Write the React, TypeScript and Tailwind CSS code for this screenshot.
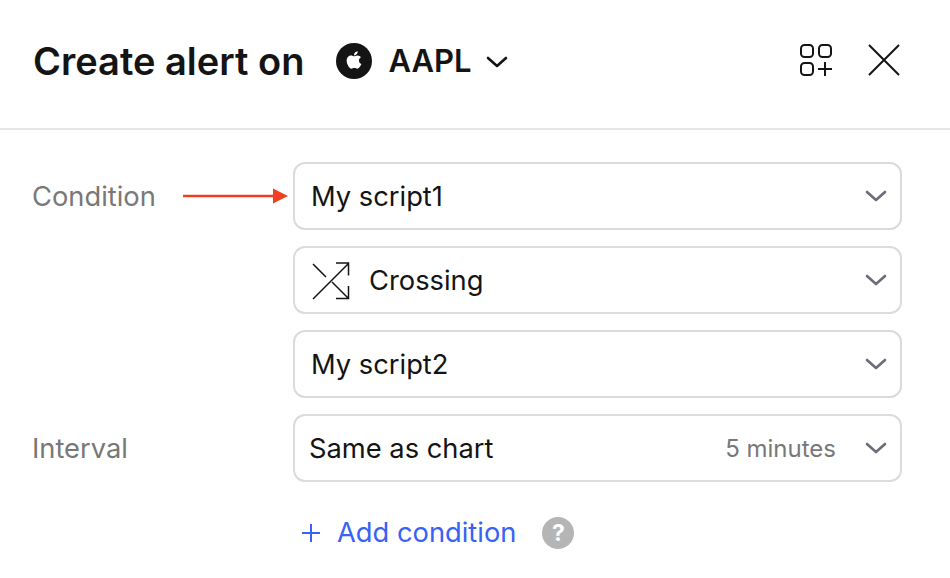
import React from 'react'
import { FaApple } from 'react-icons/fa'

const Chevron = ({ className = 'w-[22px] h-[12px] text-[#6a6d78]' }: { className?: string }) => (
  <svg viewBox="0 0 22 12" fill="none" className={className}>
    <path d="M2 2l9 8 9-8" stroke="currentColor" strokeWidth="2.6" strokeLinecap="round" strokeLinejoin="round" />
  </svg>
)

const CrossingIcon = () => (
  <svg viewBox="0 0 38 40" fill="none" className="w-[38px] h-[40px] shrink-0 text-[#141414]">
    <path d="M1 38L36 3M24 2h12.500v12.500M1 3l13 13M20 21l16 16M36.500 25v12.500H24" stroke="currentColor" strokeWidth="1.500" />
  </svg>
)

const Select = ({ children, right, px = 'pl-[16px]' }: { children: React.ReactNode; right?: string; px?: string }) => (
  <div className={`flex h-[68px] flex-1 items-center rounded-[12px] border-2 border-[#dbdbdb] pr-[13px] ${px}`}>
    <div className="mt-[2px] flex flex-1 items-center text-[27.3px] text-[#141414]">{children}</div>
    {right && <span className="mr-[29px] mt-[2px] text-[24px] text-[#787878]">{right}</span>}
    <Chevron />
  </div>
)

const Row = ({ label, children }: { label?: string; children: React.ReactNode }) => (
  <div className="flex items-center">
    <div className="mt-[2px] w-[261px] shrink-0 text-[27.3px] text-[#787878]">{label}</div>
    {children}
  </div>
)

export default function App() {
  return (
    <div className="h-[578px] w-[950px] overflow-hidden bg-white font-['Inter',sans-serif]">
      <div className="flex h-[130px] items-center border-b-2 border-[#e6e6e6] pb-[6px] pl-[33px] pr-[50px]">
        <h1 className="text-[38px] font-semibold text-[#141414]">Create alert on</h1>
        <div className="ml-[32px] flex h-[36px] w-[36px] items-center justify-center rounded-full bg-[#141414] text-white">
          <FaApple className="mb-[2px] h-[20px] w-[20px]" />
        </div>
        <span className="ml-[16px] text-[31px] font-semibold text-[#141414]">AAPL</span>
        <Chevron className="ml-[15px] mt-[1px] h-[12px] w-[22px] text-[#141414]" />
        <div className="mb-[2px] ml-auto flex items-center gap-[35px] text-[#141414]">
          <svg viewBox="0 0 34 34" fill="none" className="h-[34px] w-[34px]">
            <rect x="2" y="2" width="12" height="12" rx="3.500" stroke="currentColor" strokeWidth="2" />
            <rect x="20" y="2" width="12" height="12" rx="3.500" stroke="currentColor" strokeWidth="2" />
            <rect x="2" y="20" width="12" height="12" rx="3.500" stroke="currentColor" strokeWidth="2" />
            <path d="M19 26h14M26 19v14" stroke="currentColor" strokeWidth="2" />
          </svg>
          <svg viewBox="0 0 32 32" fill="none" className="h-[32px] w-[32px]">
            <path d="M1 1l30 30M31 1L1 31" stroke="currentColor" strokeWidth="2" />
          </svg>
        </div>
      </div>
      <div className="flex flex-col gap-[16px] pl-[32px] pr-[48px] pt-[32px]">
        <div className="relative">
          <Row label="Condition">
            <Select>My script1</Select>
          </Row>
          <svg viewBox="0 0 106 16" className="absolute left-[151px] top-[26px] h-[16px] w-[106px] text-[#f0401f]">
            <path d="M0 8h92" stroke="currentColor" strokeWidth="2.500" />
            <path d="M90 0.500l15 7.500-15 7.500z" fill="currentColor" />
          </svg>
        </div>
        <Row>
          <Select px="pl-[17px]">
            <CrossingIcon />
            <span className="ml-[19px]">Crossing</span>
          </Select>
        </Row>
        <Row>
          <Select>My script2</Select>
        </Row>
        <Row label="Interval">
          <Select right="5 minutes" px="pl-[14px]">Same as chart</Select>
        </Row>
        <div className="flex items-center pl-[269px] pt-[15px]">
          <svg viewBox="0 0 20 20" className="h-[20px] w-[20px] text-[#3861f6]">
            <path d="M1 10h18M10 1v18" stroke="currentColor" strokeWidth="2" />
          </svg>
          <span className="ml-[16px] text-[27.3px] text-[#3861f6]">Add condition</span>
          <div className="ml-[26px] flex h-[32px] w-[32px] items-center justify-center rounded-full bg-[#b5b5b5] text-[23px] font-bold text-white">?</div>
        </div>
      </div>
    </div>
  )
}
